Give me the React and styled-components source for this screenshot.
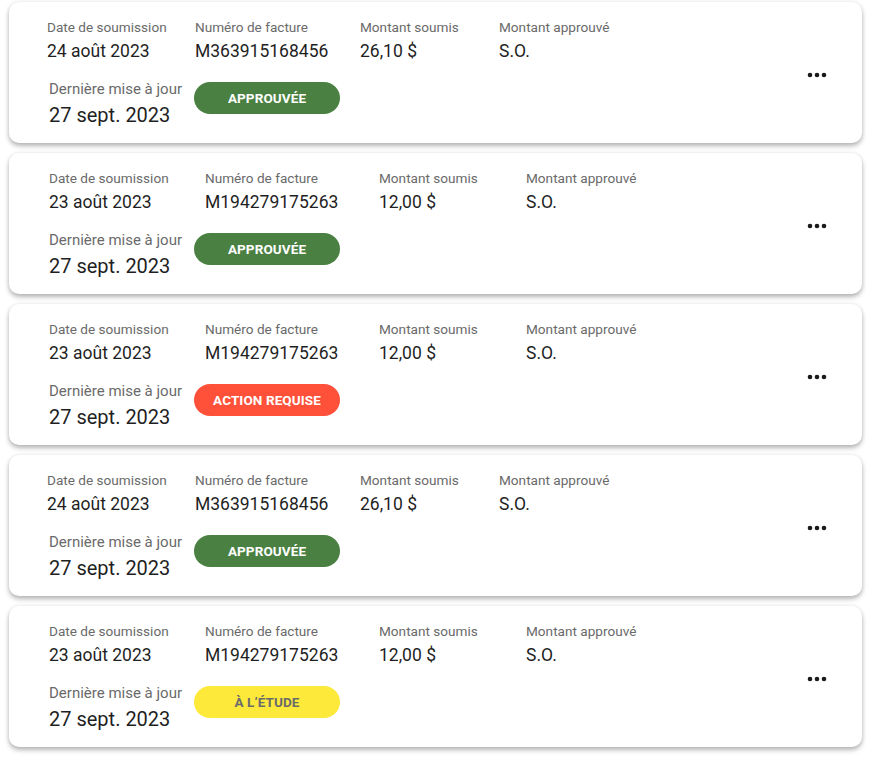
import React from "react";
import styled, { createGlobalStyle } from "styled-components";

const GlobalStyle = createGlobalStyle`
  * { box-sizing: border-box; }
  html, body { margin: 0; padding: 0; background: #ffffff; }
  body { font-family: Roboto, "Liberation Sans", Arial, sans-serif; }
`;

const Page = styled.div`
  display: flex;
  flex-direction: column;
  gap: 10px;
  padding: 2px 8px 10px 9px;
  width: 870px;
`;

const Card = styled.div`
  display: flex;
  align-items: center;
  background: #fff;
  border-radius: 10px;
  box-shadow: 0 3px 5px rgba(0, 0, 0, 0.28), 0 0 4px rgba(0, 0, 0, 0.08);
  padding: 17px 35px 16px 40px;
`;

const Content = styled.div`
  flex: 1;
  display: flex;
  flex-direction: column;
  gap: 18px;
`;

const TopRow = styled.div`
  display: grid;
  grid-template-columns: ${(p) => p.$cols};
  margin-left: ${(p) => p.$shift}px;
`;

const Field = styled.div`
  display: flex;
  flex-direction: column;
  gap: 6px;
`;

const Label = styled.span`
  font-size: 13.6px;
  line-height: 16px;
  color: #6a6a6a;
  white-space: nowrap;
`;

const Value = styled.span`
  font-size: 17.5px;
  line-height: 21px;
  color: #1f1f1f;
  white-space: nowrap;
`;

const BottomRow = styled.div`
  display: flex;
  align-items: flex-start;
`;

const Updated = styled.div`
  width: 145px;
  display: flex;
  flex-direction: column;
  gap: 5px;
`;

const UpdatedLabel = styled.span`
  font-size: 15px;
  line-height: 18px;
  color: #6a6a6a;
  white-space: nowrap;
`;

const UpdatedValue = styled.span`
  font-size: 20px;
  line-height: 24px;
  color: #1f1f1f;
  white-space: nowrap;
`;

const badgeColors = {
  approved: { bg: "#4a8142", fg: "#ffffff" },
  action: { bg: "#ff513a", fg: "#ffffff" },
  review: { bg: "#fde93a", fg: "#6b6b6b" },
};

const Badge = styled.span`
  width: 146px;
  height: 32px;
  margin-top: 2px;
  border-radius: 16px;
  display: flex;
  align-items: center;
  justify-content: center;
  background: ${(p) => badgeColors[p.$status].bg};
  color: ${(p) => badgeColors[p.$status].fg};
  font-size: 13.5px;
  font-weight: 700;
  letter-spacing: 0.1px;
  text-transform: uppercase;
`;

const MoreButton = styled.button`
  border: none;
  background: transparent;
  padding: 0;
  margin-top: 4px;
  width: 20px;
  height: 6px;
  display: flex;
  align-items: center;
  justify-content: center;
  cursor: pointer;
  color: #1a1a1a;
`;

const Dots = () => (
  <svg width="20" height="6" viewBox="0 0 20 6" aria-hidden="true">
    <circle cx="3" cy="3" r="2.3" fill="currentColor" />
    <circle cx="10" cy="3" r="2.3" fill="currentColor" />
    <circle cx="17" cy="3" r="2.3" fill="currentColor" />
  </svg>
);

const layouts = {
  a: { cols: "148px 165px 139px 1fr", shift: -2 },
  b: { cols: "156px 174px 147px 1fr", shift: 0 },
};

const claims = [
  { layout: "a", date: "24 août 2023", invoice: "M363915168456", amount: "26,10 $", status: "approved", text: "Approuvée" },
  { layout: "b", date: "23 août 2023", invoice: "M194279175263", amount: "12,00 $", status: "approved", text: "Approuvée" },
  { layout: "b", date: "23 août 2023", invoice: "M194279175263", amount: "12,00 $", status: "action", text: "Action requise" },
  { layout: "a", date: "24 août 2023", invoice: "M363915168456", amount: "26,10 $", status: "approved", text: "Approuvée" },
  { layout: "b", date: "23 août 2023", invoice: "M194279175263", amount: "12,00 $", status: "review", text: "À l’étude" },
];

export default function App() {
  return (
    <>
      <GlobalStyle />
      <Page>
        {claims.map((c, i) => (
          <Card key={i}>
            <Content>
              <TopRow $cols={layouts[c.layout].cols} $shift={layouts[c.layout].shift}>
                <Field>
                  <Label>Date de soumission</Label>
                  <Value>{c.date}</Value>
                </Field>
                <Field>
                  <Label>Numéro de facture</Label>
                  <Value>{c.invoice}</Value>
                </Field>
                <Field>
                  <Label>Montant soumis</Label>
                  <Value>{c.amount}</Value>
                </Field>
                <Field>
                  <Label>Montant approuvé</Label>
                  <Value>S.O.</Value>
                </Field>
              </TopRow>
              <BottomRow>
                <Updated>
                  <UpdatedLabel>Dernière mise à jour</UpdatedLabel>
                  <UpdatedValue>27 sept. 2023</UpdatedValue>
                </Updated>
                <Badge $status={c.status}>{c.text}</Badge>
              </BottomRow>
            </Content>
            <MoreButton aria-label="Plus d’options">
              <Dots />
            </MoreButton>
          </Card>
        ))}
      </Page>
    </>
  );
}
